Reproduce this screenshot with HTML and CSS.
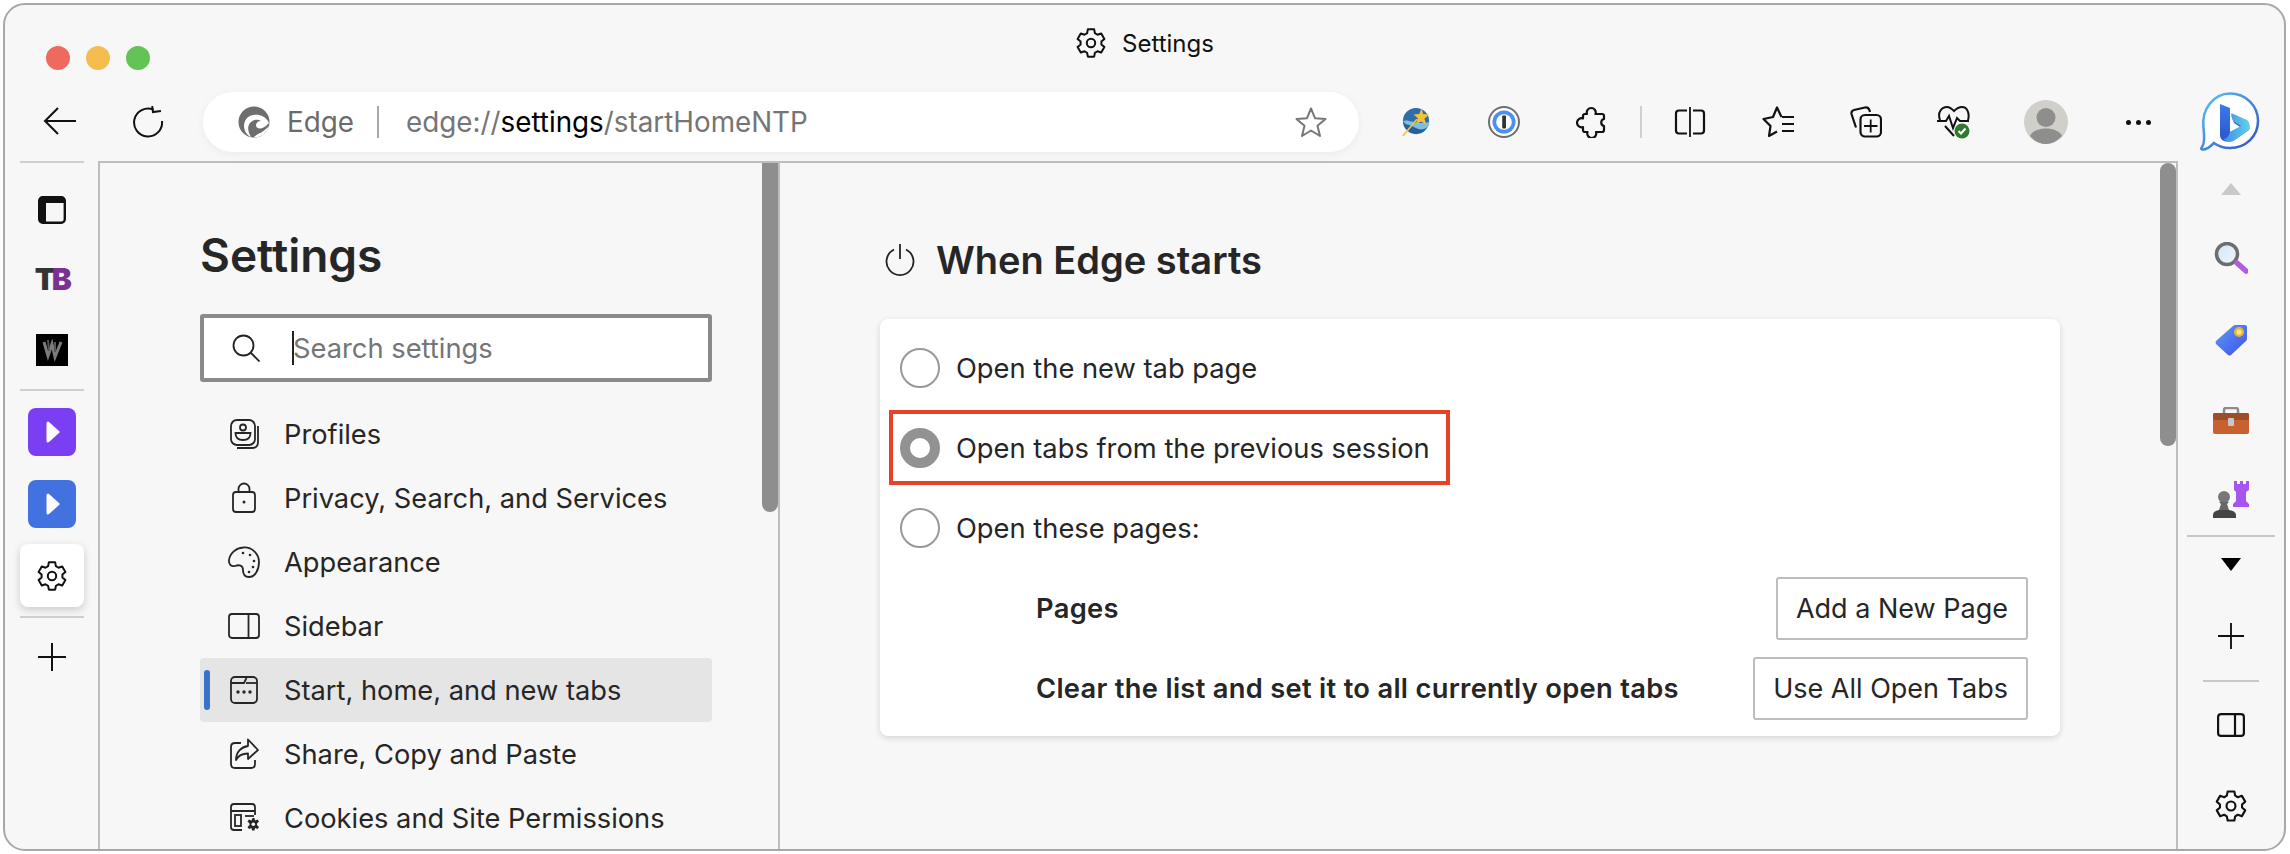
FILE: index.html
```html
<!DOCTYPE html>
<html lang="en">
<head>
<meta charset="utf-8">
<title>Settings</title>
<link rel="stylesheet" href="styles.css">
</head>
<body>
<svg class="defs" width="0" height="0" aria-hidden="true">
  <symbol id="gear" viewBox="0 0 32 32">
    <path d="M12.85 2.36L19.15 2.36L19.93 6.26L22.46 7.73L26.24 6.45L29.39 11.91L26.4 14.54L26.4 17.46L29.39 20.09L26.24 25.55L22.46 24.27L19.93 25.74L19.15 29.64L12.85 29.64L12.07 25.74L9.54 24.27L5.76 25.55L2.61 20.09L5.6 17.46L5.6 14.54L2.61 11.91L5.76 6.45L9.54 7.73L12.07 6.26Z" fill="none" stroke="currentColor" stroke-width="2" stroke-linejoin="round"/>
    <circle cx="16" cy="16" r="4.2" fill="none" stroke="currentColor" stroke-width="2"/>
  </symbol>
  <symbol id="plus" viewBox="0 0 28 28">
    <path d="M0 14H28M14 0V28" fill="none" stroke="currentColor" stroke-width="2"/>
  </symbol>
  <symbol id="play" viewBox="0 0 14 22">
    <path d="M2 2L12 11L2 20Z" fill="#fff" stroke="#fff" stroke-width="3" stroke-linejoin="round"/>
  </symbol>
</svg>
<div class="window">
  <header class="titlebar">
    <div class="lights"><span class="light light-red"></span><span class="light light-yellow"></span><span class="light light-green"></span></div>
    <div class="title"><svg class="title-gear"><use href="#gear"/></svg><span>Settings</span></div>
  </header>
  <div class="toolbar">
    <svg class="back" viewBox="0 0 34 28"><path d="M33 14H2M15 1L2 14L15 27" fill="none" stroke="#111" stroke-width="2"/></svg>
    <svg class="reload" viewBox="0 0 32 32"><path d="M21.5 3.6A14 14 0 1 0 30 15" fill="none" stroke="#111" stroke-width="2"/><path d="M21 0V6H29" fill="none" stroke="#111" stroke-width="2" transform="rotate(-8 21 6)"/></svg>
    <div class="address">
      <svg class="edge-logo" viewBox="0 0 32 32">
        <circle cx="16" cy="16" r="15.5" fill="#6e6e6e"/>
        <path d="M31 17C28 10 21 8 15 9C9 10 6 15 6 20C6 25 9 29 13 31C10 26 9 21 12 17C15 13 20 13 23 15C20 15 18 17 18 19C18 23 24 25 31 17Z" fill="#fff"/>
        <path d="M16 31C20 27 25 27 31 20C29 27 23 32 16 31Z" fill="#fff"/>
      </svg>
      <span class="site">Edge</span>
      <span class="addr-sep"></span>
      <span class="url">edge://<b>settings</b>/startHomeNTP</span>
      <svg class="star" viewBox="0 0 32 32"><path d="M16 2.5L20 12.2L30.5 13L22.5 19.8L25 30L16 24.5L7 30L9.5 19.8L1.5 13L12 12.2Z" fill="none" stroke="#777" stroke-width="2" stroke-linejoin="round"/></svg>
    </div>
    <div class="tools">
      <span class="tool">
        <svg class="ic30" viewBox="0 0 32 32">
          <circle cx="16" cy="15" r="14" fill="#2f6ca8"/>
          <path d="M2 15C9 12 15 20 30 16C31 21 26 24 20 24C13 24 6 20 2 15Z" fill="#7fbfdc"/>
          <path d="M3 19C10 17 15 24 25 25C20 30 8 30 3 19Z" fill="#23609c"/>
          <path d="M2 31L17 13" stroke="#f4c23c" stroke-width="1.8"/>
          <path d="M22 1L23.5 7.5L30 8L25 12.5L27 19L21.5 15.5L16 18L18 12L13.5 8L19.5 7.5Z" fill="#f4c23c"/>
        </svg>
      </span>
      <span class="tool">
        <svg class="ic32" viewBox="0 0 32 32">
          <circle cx="16" cy="16" r="15" fill="#fff" stroke="#6f6f6f" stroke-width="2"/>
          <circle cx="16" cy="16" r="11.5" fill="#4a90f2"/>
          <circle cx="16" cy="16" r="7.8" fill="#fff"/>
          <rect x="14.2" y="9.5" width="3.8" height="13" rx=".8" fill="#333"/>
        </svg>
      </span>
      <span class="tool">
        <svg class="ic32" viewBox="0 0 32 32"><path d="M9 8H11A4.500 4.500 0 1 1 19.500 8H26Q28 8 28 10V13A3.600 3.600 0 0 0 28 20V24Q28 26 26 26H20A4.500 4.500 0 1 1 11.500 26H9Q7 26 7 24V21A4.500 4.500 0 1 1 7 12.500V10Q7 8 9 8Z" fill="none" stroke="#111" stroke-width="2.200" stroke-linejoin="round"/></svg>
      </span>
      <span class="tool-sep"></span>
      <span class="tool">
        <svg class="ic32" viewBox="0 0 32 32"><path d="M13 4.500H5Q2 4.500 2 7.500V24.500Q2 27.500 5 27.500H13M19 4.500H27Q30 4.500 30 7.500V24.500Q30 27.500 27 27.500H19" fill="none" stroke="#111" stroke-width="2.200"/><path d="M16 1V31" stroke="#111" stroke-width="1.800"/></svg>
      </span>
      <span class="tool">
        <svg class="ic32" viewBox="0 0 32 32"><path d="M19.500 11L15 1.500L11 11L1.500 13L8.500 20L7 30L15 25.500" fill="none" stroke="#111" stroke-width="2.200" stroke-linejoin="round"/><path d="M20 11H32M20 18H32M20 25H32" stroke="#111" stroke-width="2.200"/></svg>
      </span>
      <span class="tool">
        <svg class="ic32" viewBox="0 0 32 32"><path d="M6 21.500L1.500 8Q1 5 4 4L15 1.500Q19 1 20 6" fill="none" stroke="#111" stroke-width="2.200"/><rect x="10.500" y="9" width="20.500" height="21.500" rx="4.500" fill="#f7f7f7" stroke="#111" stroke-width="2.200"/><path d="M14 20H27.500M20.700 13.500V26.500" stroke="#111" stroke-width="1.800"/></svg>
      </span>
      <span class="tool">
        <svg class="ic34" viewBox="0 0 34 34">
          <path d="M3 15C0 7 5 2 10 2C13 2 15 4 17 6C19 4 21 2 25 2C30 2 33 8 31 15M8 21L17 31" fill="none" stroke="#111" stroke-width="2"/>
          <path d="M0 16H9L12 11L16 23L20 13L23 16H32" fill="none" stroke="#111" stroke-width="2"/>
          <circle cx="25" cy="26" r="7.500" fill="#2d7a2f"/>
          <path d="M21.500 26L24 28.500L28.500 23.500" fill="none" stroke="#fff" stroke-width="2"/>
        </svg>
      </span>
      <span class="tool tool-after">
        <svg class="avatar" viewBox="0 0 44 44">
          <circle cx="22" cy="22" r="22" fill="#d0cfca"/>
          <circle cx="22" cy="17.500" r="9.500" fill="#8e8e8c"/>
          <path d="M6 36C10 26 34 26 38 36C33 41 28 44 22 44C16 44 10 41 6 36Z" fill="#8e8e8c"/>
        </svg>
      </span>
      <span class="tool tool-after"><span class="more"><i></i><i></i><i></i></span></span>
      <span class="tool tool-after">
        <svg class="bing" viewBox="0 0 60 60">
          <defs>
            <linearGradient id="bingRing" x1="0" y1="0" x2="1" y2="1"><stop offset="0" stop-color="#5cc6f2"/><stop offset="1" stop-color="#2f4fc6"/></linearGradient>
            <linearGradient id="bingB" x1="0" y1="0" x2="0" y2="1"><stop offset="0" stop-color="#3b7be8"/><stop offset="1" stop-color="#2a55cc"/></linearGradient>
            <linearGradient id="bingC" x1="0" y1="0" x2="1" y2="0"><stop offset="0" stop-color="#3d8bea"/><stop offset="1" stop-color="#62d4e6"/></linearGradient>
          </defs>
          <path d="M30 1.500C46 1.500 58 14 58 29C58 44 46 56 30 56C24 56 18 54 14 51C10 55 6 58 2 57.500C1 57 1 56 2 55C5 51 4.500 44 3.500 36C1 17 14 1.500 30 1.500Z" fill="#fff" stroke="url(#bingRing)" stroke-width="2.500"/>
          <path d="M20 12L30 16V40L40 35L34 31L31 23L46 30Q49 32 49 36V38L33 49Q28 50 24 49Q20 47 20 43Z" fill="url(#bingB)"/>
          <path d="M30 40L41 34L33 29L31 21L47 28Q50 30 50 37L35 48Q28 52 23 47Q28 47 30 40Z" fill="url(#bingC)"/>
        </svg>
      </span>
    </div>
  </div>
  <div class="body">
    <aside class="rail-left">
      <span class="rail-sep rail-sep-first"></span>
      <span class="rail-slot rail-slot-first">
        <svg class="ic-tab" viewBox="0 0 28 28"><rect x="1.200" y="1.200" width="25.600" height="25.600" rx="3.500" fill="none" stroke="#111" stroke-width="2.400"/><path d="M2 2H26V7H8V26H2Z" fill="#111"/></svg>
      </span>
      <span class="rail-slot"><span class="tb-logo">T<em>B</em></span></span>
      <span class="rail-slot">
        <svg class="ic-w" viewBox="0 0 32 32"><rect width="32" height="32" fill="#000"/><path d="M8 8L12 22L16 10L19 23L25 8" fill="none" stroke="#7b7b7b" stroke-width="3"/><path d="M12 6L13 17M19 8L19 18" stroke="#555" stroke-width="2"/></svg>
      </span>
      <span class="rail-sep rail-sep-mid"></span>
      <span class="tile tile-purple"><svg class="play"><use href="#play"/></svg></span>
      <span class="tile tile-blue"><svg class="play"><use href="#play"/></svg></span>
      <span class="tile-active"><svg class="ic32"><use href="#gear"/></svg></span>
      <span class="rail-sep rail-sep-low"></span>
      <svg class="rail-plus"><use href="#plus"/></svg>
    </aside>

    <div class="content">
      <nav class="nav">
        <h1 class="nav-title">Settings</h1>
        <div class="search">
          <svg class="search-ic" viewBox="0 0 28 28"><circle cx="11.500" cy="11.500" r="10" fill="none" stroke="#222" stroke-width="1.800"/><path d="M18.500 18.500L27.500 27.500" stroke="#222" stroke-width="1.800"/></svg>
          <span class="caret"></span>
          <span class="search-text">Search settings</span>
        </div>
        <ul class="nav-list">
          <li class="nav-item">
            <svg class="nav-ic" viewBox="0 0 32 32"><rect x="3" y="2" width="24" height="25" rx="6" fill="none" stroke="#262626" stroke-width="1.800"/><circle cx="15" cy="9.500" r="3" fill="none" stroke="#262626" stroke-width="1.800"/><path d="M7.500 15H22.500Q22.500 22 15 22Q7.500 22 7.500 15Z" fill="none" stroke="#262626" stroke-width="1.800"/><path d="M30 8V24Q30 30 24 30H9" fill="none" stroke="#262626" stroke-width="1.800"/></svg>
            <span>Profiles</span>
          </li>
          <li class="nav-item">
            <svg class="nav-ic" viewBox="0 0 32 32"><rect x="5" y="10" width="22" height="20" rx="3" fill="none" stroke="#262626" stroke-width="1.800"/><path d="M10.500 10V7A5.500 5.500 0 0 1 21.500 7V10" fill="none" stroke="#262626" stroke-width="1.800"/><circle cx="16" cy="20" r="1.500" fill="#262626"/></svg>
            <span>Privacy, Search, and Services</span>
          </li>
          <li class="nav-item">
            <svg class="nav-ic" viewBox="0 0 32 32"><path d="M15 1.500C24 .5 31 8 31 16C31 24 27 31 21 31C17 31 15 28 15 24C15 19 11 18.500 7 20C3 21 .5 18 1 14C2 7 8 2 15 1.500Z" fill="none" stroke="#262626" stroke-width="1.800"/><circle cx="15" cy="7" r="1.300" fill="#262626"/><circle cx="22" cy="9" r="1.300" fill="#262626"/><circle cx="26" cy="15" r="1.300" fill="#262626"/><circle cx="25" cy="21" r="1.300" fill="#262626"/><circle cx="21" cy="26" r="1.300" fill="#262626"/></svg>
            <span>Appearance</span>
          </li>
          <li class="nav-item">
            <svg class="nav-ic" viewBox="0 0 32 32"><rect x="1" y="4" width="30" height="24" rx="3" fill="none" stroke="#262626" stroke-width="1.800"/><path d="M20.500 4V28" stroke="#262626" stroke-width="1.800"/></svg>
            <span>Sidebar</span>
          </li>
          <li class="nav-item nav-item-active">
            <svg class="nav-ic" viewBox="0 0 32 32"><rect x="3" y="3" width="26" height="26" rx="4" fill="none" stroke="#262626" stroke-width="1.800"/><path d="M3 9H16L18.500 4" fill="none" stroke="#262626" stroke-width="1.800"/><path d="M18 9H29" stroke="#262626" stroke-width="1.800"/><circle cx="10" cy="18" r="1.700" fill="#262626"/><circle cx="16" cy="18" r="1.700" fill="#262626"/><circle cx="22" cy="18" r="1.700" fill="#262626"/></svg>
            <span>Start, home, and new tabs</span>
          </li>
          <li class="nav-item">
            <svg class="nav-ic" viewBox="0 0 32 32"><path d="M13 5H7Q3 5 3 9V26Q3 30 7 30H23Q27 30 27 26V22" fill="none" stroke="#262626" stroke-width="1.800"/><path d="M20 1.500L30 12L20 21V15.500C14 15.500 10 18 8 22C8 14 13 9 20 8Z" fill="none" stroke="#262626" stroke-width="1.800" stroke-linejoin="round"/></svg>
            <span>Share, Copy and Paste</span>
          </li>
          <li class="nav-item">
            <svg class="nav-ic" viewBox="0 0 32 32"><path d="M14 28H6Q3 28 3 25V5Q3 2 6 2H24Q27 2 27 5V13M3 9H27" fill="none" stroke="#262626" stroke-width="1.800"/><rect x="7" y="13" width="6" height="11" fill="none" stroke="#262626" stroke-width="1.800"/><path d="M17 14H26" stroke="#262626" stroke-width="1.800"/><path d="M24.500 16L26.500 16L27 18.500L29.500 17.500L31 19.500L29 21.500L29 23L31 25L29.500 27L27 26L26.500 28.500L24 28.500L23.500 26L21 27L19.500 25L21.500 23L21.500 21.500L19.500 19.500L21 17.500L23.500 18.500Z" fill="#262626"/><circle cx="25.300" cy="22.300" r="1.800" fill="#f7f7f7"/></svg>
            <span>Cookies and Site Permissions</span>
          </li>
        </ul>
        <span class="scroll scroll-nav"></span>
      </nav>
      <main class="main">
        <div class="section-head">
          <svg class="power" viewBox="0 0 30 32"><path d="M9 5.500A13.500 13.500 0 1 0 21 5.500" fill="none" stroke="#222" stroke-width="1.800"/><path d="M15 0V15" stroke="#222" stroke-width="1.800"/></svg>
          <h2 class="section-title">When Edge starts</h2>
        </div>
        <section class="card">
          <div class="opt"><span class="radio"></span><span>Open the new tab page</span></div>
          <div class="opt"><span class="radio radio-on"></span><span>Open tabs from the previous session</span></div>
          <div class="opt"><span class="radio"></span><span>Open these pages:</span></div>
          <div class="sub"><strong>Pages</strong><button class="btn" type="button">Add a New Page</button></div>
          <div class="sub"><strong>Clear the list and set it to all currently open tabs</strong><button class="btn" type="button">Use All Open Tabs</button></div>
          <span class="callout"></span>
        </section>
        <span class="scroll scroll-main"></span>
      </main>
    </div>

    <aside class="rail-right">
      <span class="caret-up"></span>
      <svg class="r-search" viewBox="0 0 34 32">
        <defs><linearGradient id="glass" x1="0" y1="0" x2="1" y2="1"><stop offset="0" stop-color="#d3e4f5"/><stop offset="1" stop-color="#f0f6fc"/></linearGradient></defs>
        <circle cx="13" cy="12" r="10.500" fill="url(#glass)" stroke="#6d6d6d" stroke-width="3.500"/>
        <path d="M23 21L32 29" stroke="#b45be0" stroke-width="5.500" stroke-linecap="round"/>
      </svg>
      <svg class="r-tag" viewBox="0 0 32 32">
        <defs><linearGradient id="tagG" x1="0" y1="0" x2="1" y2="1"><stop offset="0" stop-color="#5b9bf0"/><stop offset="1" stop-color="#4050f0"/></linearGradient></defs>
        <path d="M1 17L18 2Q19 1 20 1H30Q32 1 32 3V15Q32 16 31 17L16 31Q15 32 13 31L1 20Q0 18 1 17Z" fill="url(#tagG)"/>
        <circle cx="24" cy="8" r="3.800" fill="#ffe4a0" stroke="#e9b52c" stroke-width="2.500"/>
      </svg>
      <svg class="r-box" viewBox="0 0 36 27">
        <path d="M11 7V3Q11 1 13 1H23Q25 1 25 3V7" fill="none" stroke="#8c8c8c" stroke-width="2.500"/>
        <rect x="0" y="6" width="36" height="21" rx="2" fill="#c8602f"/>
        <rect x="0" y="6" width="36" height="7" rx="2" fill="#9a4f2a"/>
        <rect x="15" y="11" width="6" height="8" rx="1" fill="#c8c8c8"/>
      </svg>
      <svg class="r-chess" viewBox="0 0 36 37">
        <path d="M21 0H24V3H27V0H30V3H33V0H36V9L33 11V20L36 23V26H20V23L23 20V11L21 9Z" fill="#a855ef"/>
        <circle cx="11" cy="16" r="6" fill="#777"/>
        <path d="M6 21H16L14 23L16 29H6L8 23Z" fill="#666"/>
        <path d="M0 37V34Q0 30 6 29H16Q23 30 23 34V37Z" fill="#444"/>
      </svg>
      <span class="r-sep r-sep-wide"></span>
      <span class="caret-down"></span>
      <svg class="r-plus"><use href="#plus"/></svg>
      <span class="r-sep r-sep-short"></span>
      <svg class="r-panel" viewBox="0 0 28 24"><rect x="1.100" y="1.100" width="25.800" height="21.800" rx="3" fill="none" stroke="#111" stroke-width="2.200"/><path d="M18 1V23" stroke="#111" stroke-width="2.200"/></svg>
      <svg class="r-gear"><use href="#gear"/></svg>
    </aside>
  </div>
</div>
</body>
</html>
```
FILE: styles.css
```css
* { box-sizing: border-box; }
html, body { margin: 0; padding: 0; background: #fff; }
body { font-family: Inter, "Liberation Sans", sans-serif; color: #262626; overflow: hidden; }
.defs { position: absolute; }
svg { display: block; flex: none; }

.window {
  width: 2283px; height: 848px; margin: 3px 0 0 3px;
  border: 2px solid #a8a8a8; border-radius: 22px;
  background: #f7f7f7; overflow: hidden;
  display: flex; flex-direction: column;
}

/* title bar */
.titlebar { height: 87px; flex: none; display: grid; grid-template-columns: 1fr auto 1fr; align-items: start; }
.lights { display: flex; gap: 16px; margin: 41px 0 0 41px; }
.light { width: 24px; height: 24px; border-radius: 50%; }
.light-red { background: #ee6a5f; }
.light-yellow { background: #f5bd4f; }
.light-green { background: #61c454; }
.title { display: flex; align-items: center; gap: 15px; margin-top: 22px; font-size: 24px; color: #111; }
.title-gear { width: 32px; height: 32px; color: #111; }

/* toolbar */
.toolbar { height: 69px; flex: none; display: flex; align-items: flex-start; }
.back { width: 34px; height: 28px; margin: 15px 0 0 38px; }
.reload { width: 32px; height: 32px; margin: 14px 0 0 55px; }
.address {
  width: 1156px; height: 60px; margin-left: 39px; padding: 0 32px 0 35px;
  display: flex; align-items: center; border-radius: 30px; background: #fff;
  box-shadow: 0 2px 10px rgba(0, 0, 0, .05);
  font-size: 27.8px; color: #757575;
}
.edge-logo { width: 32px; height: 32px; }
.site { margin-left: 17px; color: #6b6b6b; }
.addr-sep { width: 2px; height: 32px; margin: 0 27px 0 23px; background: #aaa; }
.url { flex: 1; }
.url b { font-weight: 400; color: #000; }
.star { width: 32px; height: 32px; }
.tools { display: flex; align-items: center; height: 60px; margin-left: 13px; }
.tool { width: 88px; display: flex; justify-content: center; align-items: center; }
.tool-after { margin-left: 4px; }
.tool-sep { width: 2px; height: 32px; margin: 0 4px; background: #cfcfcf; }
.ic30 { width: 30px; height: 32px; }
.ic32 { width: 32px; height: 32px; }
.ic34 { width: 34px; height: 34px; }
.avatar { width: 44px; height: 44px; }
.bing { width: 60px; height: 60px; }
.more { display: flex; gap: 5px; }
.more i { width: 5px; height: 5px; border-radius: 50%; background: #111; }

/* body */
.body { flex: 1; min-height: 0; display: flex; }

/* left rail */
.rail-left { width: 93px; flex: none; display: flex; flex-direction: column; align-items: center; }
.rail-sep { width: 64px; height: 2px; background: #cfcfcf; flex: none; }
.rail-sep-first { margin-top: 0; }
.rail-slot { height: 70px; flex: none; display: flex; align-items: center; justify-content: center; }
.rail-slot-first { margin-top: 12px; }
.rail-sep-mid { margin-top: 4px; }
.rail-sep-low { margin-top: 9px; }
.ic-tab { width: 28px; height: 28px; }
.tb-logo { margin-bottom: 3px; font-size: 30px; font-weight: 900; letter-spacing: -3.5px; color: #333; }
.tb-logo em { font-style: normal; color: #7a3191; }
.ic-w { width: 32px; height: 32px; }
.tile { width: 48px; height: 48px; flex: none; border-radius: 8px; display: flex; align-items: center; justify-content: center; padding-left: 2px; }
.tile-purple { margin-top: 17px; background: #7a3ff2; }
.tile-blue { margin-top: 24px; background: #4272e0; }
.play { width: 14px; height: 22px; }
.tile-active { width: 64px; height: 63px; flex: none; margin-top: 16px; border-radius: 8px; background: #fff; box-shadow: 0 3px 8px rgba(0, 0, 0, .18); display: flex; align-items: center; justify-content: center; color: #111; }
.rail-plus { width: 28px; height: 28px; margin-top: 25px; color: #111; }

/* content */
.content { flex: 1; min-width: 0; display: flex; border: 2px solid #bdbdbd; border-bottom: 0; }
.nav { width: 680px; flex: none; position: relative; padding: 64px 0 0 100px; border-right: 2px solid #bdbdbd; overflow: hidden; }
.nav-title { margin: 0; font-size: 46px; line-height: 56px; font-weight: 600; color: #262626; }
.search { width: 512px; height: 68px; margin-top: 31px; display: flex; align-items: center; background: #fff; border: 4px solid #8a8a8a; border-radius: 3px; padding-left: 28px; font-size: 27.3px; color: #757575; }
.search-ic { width: 28px; height: 28px; }
.caret { width: 2px; height: 34px; margin-left: 32px; background: #222; }
.search-text { margin-left: -1px; }
.nav-list { width: 512px; margin: 20px 0 0; padding: 0; list-style: none; }
.nav-item { height: 64px; display: flex; align-items: center; gap: 24px; padding-left: 28px; font-size: 27.25px; border-radius: 4px; position: relative; white-space: nowrap; }
.nav-ic { width: 32px; height: 32px; }
.nav-item-active { background: #e5e5e5; }
.nav-item-active::before { content: ""; position: absolute; left: 4px; top: 12px; width: 6px; height: 40px; border-radius: 3px; background: #3a72c8; }
.scroll { position: absolute; top: 0; width: 16px; background: #8e8e8e; border-radius: 0 0 8px 8px; }
.scroll-nav { right: 0; height: 349px; }
.scroll-main { right: 0; height: 283px; border-radius: 8px; }

/* main */
.main { flex: 1; min-width: 0; position: relative; padding: 74px 116px 0 100px; }
.section-head { display: flex; align-items: center; gap: 21px; padding-left: 5px; }
.power { width: 30px; height: 32px; }
.section-title { margin: 0; font-size: 38px; line-height: 46px; font-weight: 600; white-space: nowrap; }
.card { position: relative; height: 417px; margin-top: 36px; padding-top: 9px; background: #fff; border-radius: 8px; box-shadow: 0 2px 6px rgba(0, 0, 0, .14); font-size: 27.3px; white-space: nowrap; }
.opt { height: 80px; display: flex; align-items: center; gap: 16px; padding-left: 20px; }
.radio { width: 40px; height: 40px; flex: none; border: 2px solid #999; border-radius: 50%; background: #fff; }
.radio-on { border: 10px solid #929292; }
.sub { height: 80px; display: flex; align-items: center; justify-content: space-between; padding: 0 32px 0 156px; }
.sub strong { font-weight: 600; letter-spacing: .3px; }
.btn { height: 63px; flex: none; padding: 0 18px; background: #fff; border: 2px solid #bdbdbd; border-radius: 3px; font: inherit; font-size: 27px; color: #262626; }
.callout { position: absolute; left: 9px; top: 91px; width: 561px; height: 75px; border: 4px solid #e8412a; }

/* right rail */
.rail-right { width: 106px; flex: none; display: flex; flex-direction: column; align-items: center; padding-top: 22px; }
.caret-up { flex: none; width: 0; height: 0; border-style: solid; border-width: 0 10px 12px; border-color: transparent transparent #c9c9c9; }
.r-search { width: 34px; height: 32px; margin-top: 47px; }
.r-tag { width: 32px; height: 32px; margin-top: 50px; }
.r-box { width: 36px; height: 27px; margin-top: 51px; }
.r-chess { width: 36px; height: 37px; margin-top: 47px; }
.r-sep { flex: none; height: 2px; background: #c8c8c8; }
.r-sep-wide { width: 88px; margin-top: 17px; }
.caret-down { flex: none; width: 0; height: 0; margin-top: 21px; border-style: solid; border-width: 13px 10px 0; border-color: #000 transparent transparent; }
.r-plus { width: 26px; height: 26px; margin-top: 52px; color: #111; }
.r-sep-short { width: 56px; margin-top: 31px; }
.r-panel { width: 28px; height: 24px; margin-top: 31px; }
.r-gear { width: 34px; height: 34px; margin-top: 52px; color: #111; }
```
